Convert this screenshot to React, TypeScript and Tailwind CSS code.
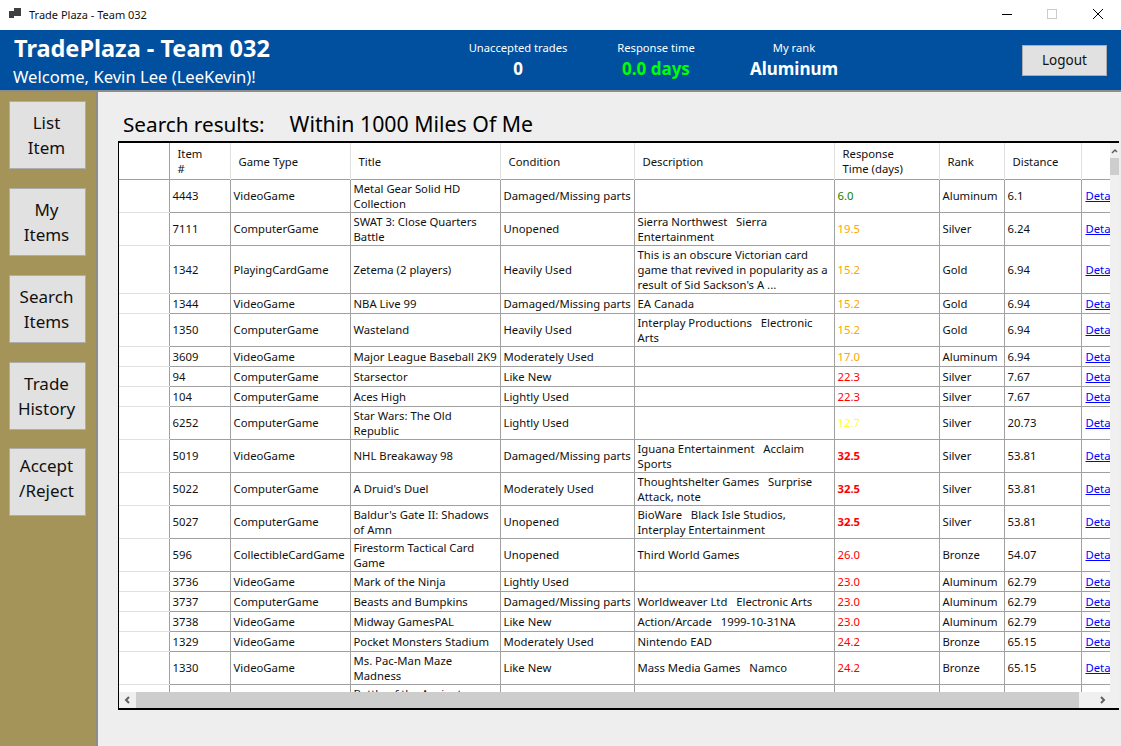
import React from 'react';

type Row = {
  h: string;
  id?: string;
  type?: string;
  title?: string[];
  cond?: string;
  desc?: string[];
  time?: string;
  tone?: string;
  rank?: string;
  dist?: string;
};

const green = 'text-[#108000]';
const orange = 'text-[#ffa500]';
const yellow = 'text-[#ffff33]';
const red = 'text-[#ff0000]';
const hot = 'text-[#ff0000] font-bold';

const rows: Row[] = [
  { h: 'h-[33px]', id: '4443', type: 'VideoGame', title: ['Metal Gear Solid HD', 'Collection'], cond: 'Damaged/Missing parts', time: '6.0', tone: green, rank: 'Aluminum', dist: '6.1' },
  { h: 'h-[33px]', id: '7111', type: 'ComputerGame', title: ['SWAT 3: Close Quarters', 'Battle'], cond: 'Unopened', desc: ['Sierra Northwest   Sierra', 'Entertainment'], time: '19.5', tone: orange, rank: 'Silver', dist: '6.24' },
  { h: 'h-[48px]', id: '1342', type: 'PlayingCardGame', title: ['Zetema (2 players)'], cond: 'Heavily Used', desc: ['This is an obscure Victorian card', 'game that revived in popularity as a', "result of Sid Sackson's A ..."], time: '15.2', tone: orange, rank: 'Gold', dist: '6.94' },
  { h: 'h-[20px]', id: '1344', type: 'VideoGame', title: ['NBA Live 99'], cond: 'Damaged/Missing parts', desc: ['EA Canada'], time: '15.2', tone: orange, rank: 'Gold', dist: '6.94' },
  { h: 'h-[33px]', id: '1350', type: 'ComputerGame', title: ['Wasteland'], cond: 'Heavily Used', desc: ['Interplay Productions   Electronic', 'Arts'], time: '15.2', tone: orange, rank: 'Gold', dist: '6.94' },
  { h: 'h-[20px]', id: '3609', type: 'VideoGame', title: ['Major League Baseball 2K9'], cond: 'Moderately Used', time: '17.0', tone: orange, rank: 'Aluminum', dist: '6.94' },
  { h: 'h-[20px]', id: '94', type: 'ComputerGame', title: ['Starsector'], cond: 'Like New', time: '22.3', tone: red, rank: 'Silver', dist: '7.67' },
  { h: 'h-[20px]', id: '104', type: 'ComputerGame', title: ['Aces High'], cond: 'Lightly Used', time: '22.3', tone: red, rank: 'Silver', dist: '7.67' },
  { h: 'h-[33px]', id: '6252', type: 'ComputerGame', title: ['Star Wars: The Old', 'Republic'], cond: 'Lightly Used', time: '12.7', tone: yellow, rank: 'Silver', dist: '20.73' },
  { h: 'h-[33px]', id: '5019', type: 'VideoGame', title: ['NHL Breakaway 98'], cond: 'Damaged/Missing parts', desc: ['Iguana Entertainment   Acclaim', 'Sports'], time: '32.5', tone: hot, rank: 'Silver', dist: '53.81' },
  { h: 'h-[33px]', id: '5022', type: 'ComputerGame', title: ["A Druid's Duel"], cond: 'Moderately Used', desc: ['Thoughtshelter Games   Surprise', 'Attack, note'], time: '32.5', tone: hot, rank: 'Silver', dist: '53.81' },
  { h: 'h-[33px]', id: '5027', type: 'ComputerGame', title: ["Baldur's Gate II: Shadows", 'of Amn'], cond: 'Unopened', desc: ['BioWare   Black Isle Studios,', 'Interplay Entertainment'], time: '32.5', tone: hot, rank: 'Silver', dist: '53.81' },
  { h: 'h-[33px]', id: '596', type: 'CollectibleCardGame', title: ['Firestorm Tactical Card', 'Game'], cond: 'Unopened', desc: ['Third World Games'], time: '26.0', tone: red, rank: 'Bronze', dist: '54.07' },
  { h: 'h-[20px]', id: '3736', type: 'VideoGame', title: ['Mark of the Ninja'], cond: 'Lightly Used', time: '23.0', tone: red, rank: 'Aluminum', dist: '62.79' },
  { h: 'h-[20px]', id: '3737', type: 'ComputerGame', title: ['Beasts and Bumpkins'], cond: 'Damaged/Missing parts', desc: ['Worldweaver Ltd   Electronic Arts'], time: '23.0', tone: red, rank: 'Aluminum', dist: '62.79' },
  { h: 'h-[20px]', id: '3738', type: 'VideoGame', title: ['Midway GamesPAL'], cond: 'Like New', desc: ['Action/Arcade   1999-10-31NA'], time: '23.0', tone: red, rank: 'Aluminum', dist: '62.79' },
  { h: 'h-[20px]', id: '1329', type: 'VideoGame', title: ['Pocket Monsters Stadium'], cond: 'Moderately Used', desc: ['Nintendo EAD'], time: '24.2', tone: red, rank: 'Bronze', dist: '65.15' },
  { h: 'h-[33px]', id: '1330', type: 'VideoGame', title: ['Ms. Pac-Man Maze', 'Madness'], cond: 'Like New', desc: ['Mass Media Games   Namco'], time: '24.2', tone: red, rank: 'Bronze', dist: '65.15' },
  { h: 'h-[33px]', title: ['Battle of the Ancient', 'Empires'] },
];

const navItems = [['List', 'Item'], ['My', 'Items'], ['Search', 'Items'], ['Trade', 'History'], ['Accept', '/Reject']];

function Lines({ lines }: { lines?: string[] }) {
  if (!lines) return null;
  return (
    <>
      {lines.map((l) => (
        <div key={l} className="whitespace-pre">{l}</div>
      ))}
    </>
  );
}

function Stat({ label, value, tone }: { label: string; value: string; tone: string }) {
  return (
    <div className="w-[138px] flex flex-col items-center">
      <div className="text-[11.2px] leading-[16px] text-white">{label}</div>
      <div className={`text-[17px] leading-[24px] mt-[1px] font-bold ${tone}`}>{value}</div>
    </div>
  );
}

const th = 'p-0 pl-[8px] font-normal text-left border-r border-[#e0e0e0] align-middle';
const thOne = `${th} pt-[2px]`;
const td = 'p-0 pl-[3px] border-r border-[#a0a0a0] align-middle overflow-hidden whitespace-nowrap';

export default function App() {
  return (
    <div className="w-[1121px] h-[746px] overflow-hidden flex flex-col bg-[#eeeeee] font-['Noto_Sans','Open_Sans',sans-serif] text-black">
      {/* Window title bar */}
      <div className="h-[30px] bg-white flex items-center shrink-0">
        <svg width="12" height="12" viewBox="0 0 12 12" className="ml-[9px] mt-[-2px]">
          <rect x="0" y="3" width="5" height="7" fill="#404040" />
          <rect x="5" y="0" width="7" height="8" fill="#404040" />
        </svg>
        <span className="ml-[8px] text-[11px] text-[#111]">Trade Plaza - Team 032</span>
        <div className="ml-auto flex items-center h-full">
          <svg width="46" height="30" viewBox="0 0 46 30">
            <path d="M19 14.5h10" stroke="#000" strokeWidth="1" />
          </svg>
          <svg width="46" height="30" viewBox="0 0 46 30">
            <rect x="18.5" y="9.5" width="9" height="9" fill="none" stroke="#ccc" />
          </svg>
          <svg width="46" height="30" viewBox="0 0 46 30">
            <path d="M18 9l10 10M28 9L18 19" stroke="#000" strokeWidth="1" />
          </svg>
        </div>
      </div>

      {/* App header */}
      <div className="h-[62px] shrink-0 bg-[#00509f] border-b-2 border-[#8c8c8c] flex">
        <div className="w-[449px] pl-[14px] pt-[2px]">
          <div className="text-[23.5px] leading-[32px] font-bold text-white whitespace-nowrap">TradePlaza - Team 032</div>
          <div className="text-[16.6px] leading-[24px] mt-[1px] -ml-[1px] text-white whitespace-nowrap">Welcome, Kevin Lee (LeeKevin)!</div>
        </div>
        <div className="flex pt-[10px]">
          <Stat label="Unaccepted trades" value="0" tone="text-white" />
          <Stat label="Response time" value="0.0 days" tone="text-[#00ff00]" />
          <Stat label="My rank" value="Aluminum" tone="text-white" />
        </div>
        <button className="ml-auto mr-[14px] mt-[15px] w-[85px] h-[31px] bg-[#e1e1e1] border border-[#adadad] text-[13.5px] text-[#111]">
          Logout
        </button>
      </div>

      <div className="flex-1 flex min-h-0">
        {/* Sidebar */}
        <div className="w-[98px] shrink-0 bg-[#a5945a] border-r-2 border-[#8c8c8c] pl-[9px] pt-[9px] flex flex-col gap-[19px]">
          {navItems.map((n, i) => (
            <button
              key={n[0]}
              className={`w-[77px] h-[68px] pr-[2px] bg-[#e1e1e1] border border-[#adadad] text-[17px] leading-[25px] text-[#111] ${i === 4 ? 'mt-[-1px] pb-[9px]' : ''}`}
            >
              {n[0]}
              <br />
              {n[1]}
            </button>
          ))}
        </div>

        {/* Main */}
        <div className="flex-1 min-w-0 pl-[20px]">
          <div className="h-[49px] pt-[16px] pl-[5px] leading-[32px] flex gap-[25px] whitespace-nowrap">
            <span className="text-[20.7px]">Search results:</span>
            <span className="text-[21.3px]">Within 1000 Miles Of Me</span>
          </div>
          <div className="w-[1001px] h-[569px] border-y-2 border-l border-black bg-white flex flex-col overflow-hidden">
            <div className="flex-1 min-h-0 flex">
              <div className="w-[991px] overflow-hidden">
                <table className="table-fixed border-collapse w-[991px] text-[11.3px] leading-[15px] text-[#111]">
                  <colgroup>
                    <col className="w-[50px]" />
                    <col className="w-[61px]" />
                    <col className="w-[120px]" />
                    <col className="w-[150px]" />
                    <col className="w-[134px]" />
                    <col className="w-[200px]" />
                    <col className="w-[105px]" />
                    <col className="w-[65px]" />
                    <col className="w-[77px]" />
                    <col className="w-[29px]" />
                  </colgroup>
                  <thead>
                    <tr className="h-[36px] border-b border-[#a0a0a0]">
                      <th className="p-0 border-r border-[#a0a0a0]"></th>
                      <th className={th}>Item<br />#</th>
                      <th className={thOne}>Game Type</th>
                      <th className={thOne}>Title</th>
                      <th className={thOne}>Condition</th>
                      <th className={thOne}>Description</th>
                      <th className={th}>Response<br />Time (days)</th>
                      <th className={thOne}>Rank</th>
                      <th className={thOne}>Distance</th>
                      <th className="p-0"></th>
                    </tr>
                  </thead>
                  <tbody>
                    {rows.map((r, i) => (
                      <tr key={i} className={`${r.h} border-b border-[#a0a0a0]`}>
                        <td className="p-0 border-r border-[#a0a0a0] border-b border-b-[#e0e0e0]"></td>
                        <td className={td}>{r.id}</td>
                        <td className={td}>{r.type}</td>
                        <td className={td}><Lines lines={r.title} /></td>
                        <td className={td}>{r.cond}</td>
                        <td className={td}><Lines lines={r.desc} /></td>
                        <td className={`${td} ${r.tone ?? ''}`}>{r.time}</td>
                        <td className={td}>{r.rank}</td>
                        <td className={td}>{r.dist}</td>
                        <td className="p-0 pl-[4px] overflow-hidden whitespace-nowrap">
                          {r.id && <span className="text-[#0000ff] underline">Details</span>}
                        </td>
                      </tr>
                    ))}
                  </tbody>
                </table>
              </div>
              {/* Vertical scrollbar */}
              <div className="w-[9px] bg-[#f0f0f0] flex flex-col items-start">
                <svg width="9" height="15" viewBox="0 0 9 15">
                  <path d="M2 10l3-3 2 2" fill="none" stroke="#606060" strokeWidth="1.5" />
                </svg>
                <div className="w-[9px] h-[17px] bg-[#cdcdcd]"></div>
              </div>
            </div>
            {/* Horizontal scrollbar */}
            <div className="h-[16px] shrink-0 bg-[#f0f0f0] flex items-center">
              <svg width="17" height="16" viewBox="0 0 17 16" className="shrink-0">
                <path d="M10 5l-3 3 3 3" fill="none" stroke="#606060" strokeWidth="2" />
              </svg>
              <div className="w-[943px] h-[16px] bg-[#cdcdcd]"></div>
              <svg width="38" height="16" viewBox="0 0 38 16" className="shrink-0">
                <path d="M22 5l3 3-3 3" fill="none" stroke="#606060" strokeWidth="2" />
              </svg>
            </div>
          </div>
        </div>
      </div>
    </div>
  );
}
